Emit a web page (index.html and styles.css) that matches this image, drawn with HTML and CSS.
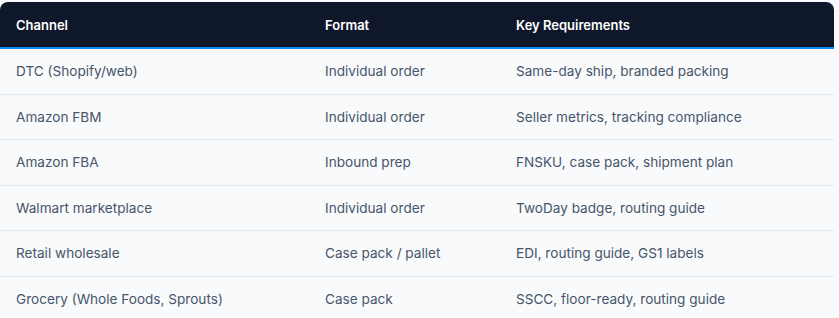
FILE: index.html
```html
<!DOCTYPE html>
<html lang="en">
<head>
<meta charset="utf-8">
<title>Channels</title>
<link rel="stylesheet" href="styles.css">
</head>
<body>
<div class="wrap">
<table class="channels">
<colgroup>
<col class="c1"><col class="c2"><col class="c3">
</colgroup>
<thead>
<tr><th>Channel</th><th>Format</th><th>Key Requirements</th></tr>
</thead>
<tbody>
<tr><td>DTC (Shopify/web)</td><td>Individual order</td><td>Same-day ship, branded packing</td></tr>
<tr><td>Amazon FBM</td><td>Individual order</td><td>Seller metrics, tracking compliance</td></tr>
<tr><td>Amazon FBA</td><td>Inbound prep</td><td>FNSKU, case pack, shipment plan</td></tr>
<tr><td>Walmart marketplace</td><td>Individual order</td><td>TwoDay badge, routing guide</td></tr>
<tr><td>Retail wholesale</td><td>Case pack / pallet</td><td>EDI, routing guide, GS1 labels</td></tr>
<tr><td>Grocery (Whole Foods, Sprouts)</td><td>Case pack</td><td>SSCC, floor-ready, routing guide</td></tr>
</tbody>
</table>
</div>
</body>
</html>
```

FILE: styles.css
```css
html, body {
  margin: 0;
  padding: 0;
  background: #f8fafc;
}
body {
  font-family: Inter, "Noto Sans", sans-serif;
  font-size: 13.6px;
}
.wrap {
  padding-top: 2px;
  width: 834px;
}
.channels {
  width: 834px;
  border-collapse: separate;
  border-spacing: 0;
  table-layout: fixed;
}
.c1 { width: 309px; }
.c2 { width: 191px; }
.c3 { width: 334px; }
.channels th {
  background: #0f172a;
  color: #ffffff;
  font-size: 13px;
  font-weight: 600;
  text-align: left;
  padding: 14.5px 16px 14px;
  line-height: 16.5px;
  border-bottom: 2px solid #0b88f2;
}
.channels th:first-child { border-top-left-radius: 8px; }
.channels th:last-child { border-top-right-radius: 8px; }
.channels td {
  color: #475569;
  padding: 14px 16px;
  line-height: 16.5px;
  border-bottom: 1px solid #e2e8f0;
  white-space: nowrap;
}
```
